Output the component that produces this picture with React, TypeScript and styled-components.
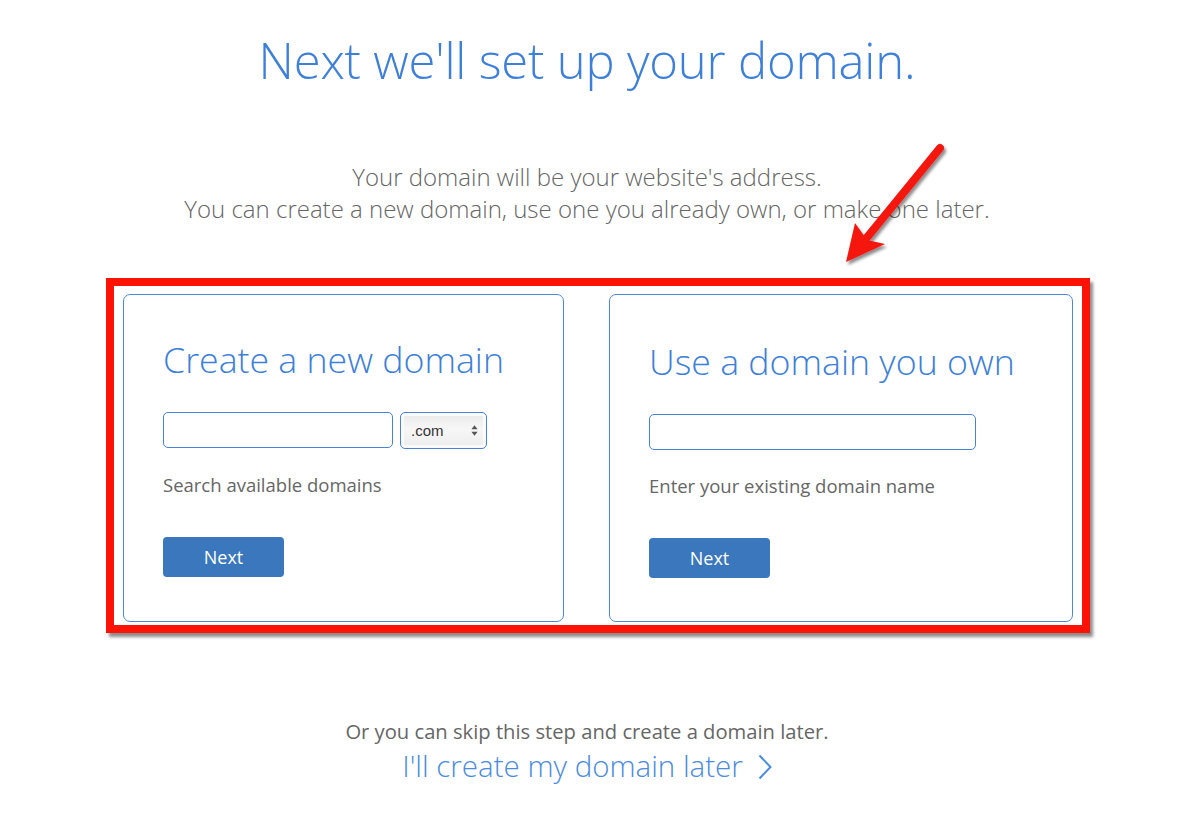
import { createGlobalStyle } from "styled-components";
import styled from "styled-components";

const GlobalStyle = createGlobalStyle`
  html, body {
    margin: 0;
    padding: 0;
    background: #ffffff;
  }
  body {
    font-family: "Open Sans", "Noto Sans", "Liberation Sans", sans-serif;
  }
  * {
    box-sizing: border-box;
  }
`;

const blue = "#3d7fd9";
const gray = "#666666";

export default function App() {
  return (
    <>
      <GlobalStyle />
      <Page>
        <Heading>Next we'll set up your domain.</Heading>
        <Intro>
          Your domain will be your website's address.
          <br />
          You can create a new domain, use one you already own, or make one later.
        </Intro>

        <Highlight>
          <Cards>
            <Card>
              <CardTitle>Create a new domain</CardTitle>
              <FieldRow>
                <TextInput $width={230} />
                <SelectWrap>
                  <Select defaultValue=".com">
                    <option>.com</option>
                    <option>.net</option>
                    <option>.org</option>
                  </Select>
                  <SelectArrows viewBox="0 0 8 14" aria-hidden>
                    <path d="M4 1 L7.5 5.5 H0.5 Z" fill="#555" />
                    <path d="M4 13 L7.5 8.5 H0.5 Z" fill="#555" />
                  </SelectArrows>
                </SelectWrap>
              </FieldRow>
              <Help>Search available domains</Help>
              <NextButton>Next</NextButton>
            </Card>

            <Card $shift={2}>
              <CardTitle>Use a domain you own</CardTitle>
              <FieldRow>
                <TextInput $width={327} />
              </FieldRow>
              <Help>Enter your existing domain name</Help>
              <NextButton>Next</NextButton>
            </Card>
          </Cards>
        </Highlight>

        <Skip>Or you can skip this step and create a domain later.</Skip>
        <LaterLink href="#">
          I'll create my domain later
          <Chevron viewBox="0 0 14 26" aria-hidden>
            <polyline points="1.5,1.5 12.5,13 1.5,24.5" />
          </Chevron>
        </LaterLink>

        <Arrow viewBox="0 0 120 140" aria-hidden>
          <defs>
            <filter id="shadow" x="-20%" y="-20%" width="140%" height="140%">
              <feDropShadow dx="2" dy="3" stdDeviation="1.6" floodColor="#000" floodOpacity="0.45" />
            </filter>
          </defs>
          <g filter="url(#shadow)">
            <line x1="102" y1="12" x2="22" y2="110" stroke="#f5130c" strokeWidth="8" strokeLinecap="round" />
            <path d="M8 126 L17 87 L29 104 L47 108 Z" fill="#f5130c" />
          </g>
        </Arrow>
      </Page>
    </>
  );
}

const Page = styled.main`
  position: relative;
  width: 1200px;
  min-height: 815px;
  margin: 0 auto;
  padding: 30px 26px 0 0;
  display: flex;
  flex-direction: column;
  align-items: center;
  text-align: center;
`;

const Heading = styled.h1`
  margin: 0;
  font-size: 49px;
  line-height: 60px;
  font-weight: 300;
  color: ${blue};
  letter-spacing: -0.2px;
`;

const Intro = styled.p`
  margin: 71px 0 0;
  font-size: 24px;
  line-height: 32px;
  font-weight: 300;
  color: ${gray};
`;

const Highlight = styled.section`
  margin-top: 53px;
  margin-left: 22px;
  width: 984px;
  border: 8px solid #fd1306;
  box-shadow: 3px 4px 3px rgba(0, 0, 0, 0.45);
  padding: 8px 9px 3px 9px;
  text-align: left;
`;

const Cards = styled.div`
  display: grid;
  grid-template-columns: 441px 464px;
  column-gap: 45px;
`;

const Card = styled.div<{ $shift?: number }>`
  height: 328px;
  border: 1.5px solid #4d87dc;
  border-radius: 7px;
  padding: ${(p) => 43 + (p.$shift ?? 0)}px 38px 0 39px;
  display: flex;
  flex-direction: column;
  align-items: flex-start;
`;

const CardTitle = styled.h2`
  margin: 0;
  font-size: 35.7px;
  line-height: 42px;
  font-weight: 300;
  color: ${blue};
  white-space: nowrap;
`;

const FieldRow = styled.div`
  margin-top: 32px;
  display: flex;
  gap: 7px;
`;

const TextInput = styled.input<{ $width: number }>`
  width: ${(p) => p.$width}px;
  height: 36px;
  border: 1.5px solid #4a82d4;
  border-radius: 5px;
  background: #fff;
  padding: 0 10px;
  font-size: 16px;
  font-family: inherit;
  outline: none;
`;

const SelectWrap = styled.div`
  position: relative;
  width: 87px;
  height: 37px;
`;

const Select = styled.select`
  appearance: none;
  width: 100%;
  height: 100%;
  border: 1.5px solid #4a82d4;
  border-radius: 5px;
  background: linear-gradient(#e9e9e9, #f7f7f7 45%, #ececec);
  box-shadow: inset 0 0 0 3px #fafafa, inset 0 1px 3px rgba(0, 0, 0, 0.15);
  padding: 0 0 0 10px;
  font-family: "Liberation Sans", Arial, sans-serif;
  font-size: 15px;
  color: #333;
  outline: none;
`;

const SelectArrows = styled.svg`
  position: absolute;
  right: 9px;
  top: 12px;
  width: 7px;
  height: 13px;
  pointer-events: none;
`;

const Help = styled.p`
  margin: 24px 0 0;
  font-size: 18.5px;
  line-height: 24px;
  font-weight: 400;
  color: ${gray};
`;

const NextButton = styled.button`
  margin-top: 40px;
  width: 121px;
  height: 40px;
  border: none;
  border-radius: 4px;
  background: #3a77bc;
  color: #ffffff;
  font-family: inherit;
  font-size: 18px;
  font-weight: 400;
  cursor: pointer;
`;

const Skip = styled.p`
  margin: 85px 0 0;
  font-size: 20.2px;
  line-height: 26px;
  font-weight: 400;
  color: ${gray};
`;

const LaterLink = styled.a`
  margin-top: 2px;
  display: inline-flex;
  align-items: center;
  gap: 15px;
  font-size: 29.5px;
  line-height: 40px;
  font-weight: 300;
  color: #4a8be0;
  text-decoration: none;
`;

const Chevron = styled.svg`
  width: 14px;
  height: 26px;
  margin-top: 2px;
  fill: none;
  stroke: #4a8be0;
  stroke-width: 2;
`;

const Arrow = styled.svg`
  position: absolute;
  left: 838px;
  top: 136px;
  width: 120px;
  height: 140px;
  overflow: visible;
`;
